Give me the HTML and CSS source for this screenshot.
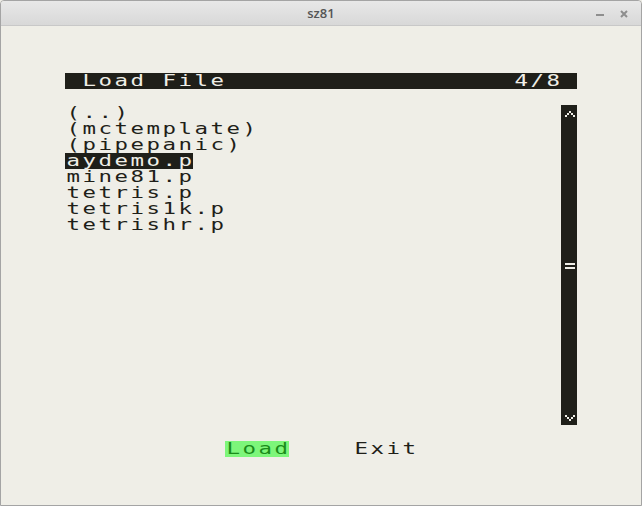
FILE: index.html
```html
<!DOCTYPE html>
<html>
<head>
<meta charset="utf-8">
<title>sz81</title>
<link rel="stylesheet" href="styles.css">
</head>
<body>
<div class="window">
  <div class="titlebar">
    <span class="title">sz81</span>
    <div class="controls">
      <svg class="ctl" width="8" height="8" viewBox="0 0 8 8"><rect x="0" y="4" width="8" height="2" fill="#8e8e8e"/></svg>
      <svg class="ctl" width="8" height="8" viewBox="0 0 8 8"><path d="M1 1 L7 7 M7 1 L1 7" stroke="#8e8e8e" stroke-width="2"/></svg>
    </div>
  </div>
  <div class="content">
    <div class="screen">
      <div class="header">
        <span class="zx"> Load File</span>
        <span class="count"><span class="zx">4/8</span></span>
      </div>
      <div class="main">
        <ul class="files">
          <li><span class="zx">(..)</span></li>
          <li><span class="zx">(mctemplate)</span></li>
          <li><span class="zx">(pipepanic)</span></li>
          <li><span class="sel"><span class="zx">aydemo.p</span></span></li>
          <li><span class="zx">mine81.p</span></li>
          <li><span class="zx">tetris.p</span></li>
          <li><span class="zx">tetris1k.p</span></li>
          <li><span class="zx">tetrishr.p</span></li>
        </ul>
        <div class="scrollbar">
          <svg class="cell" width="16" height="16" viewBox="0 0 16 16"><g fill="#efeee7"><rect x="8" y="6" width="2" height="2"/><rect x="6" y="8" width="2" height="2"/><rect x="10" y="8" width="2" height="2"/><rect x="4" y="10" width="2" height="2"/><rect x="12" y="10" width="2" height="2"/></g></svg>
          <svg class="cell thumb" width="16" height="16" viewBox="0 0 16 16"><g fill="#efeee7"><rect x="4" y="6" width="10" height="2"/><rect x="4" y="10" width="10" height="2"/></g></svg>
          <svg class="cell down" width="16" height="16" viewBox="0 0 16 16"><g fill="#efeee7"><rect x="4" y="6" width="2" height="2"/><rect x="12" y="6" width="2" height="2"/><rect x="6" y="8" width="2" height="2"/><rect x="10" y="8" width="2" height="2"/><rect x="8" y="10" width="2" height="2"/></g></svg>
        </div>
      </div>
      <div class="buttons">
        <span class="btn active"><span class="zx">Load</span></span>
        <span class="btn"><span class="zx">Exit</span></span>
      </div>
    </div>
  </div>
</div>
</body>
</html>
```

FILE: styles.css
```css
html, body {
  margin: 0;
  padding: 0;
  background: #efeee7;
}

.window {
  width: 642px;
  height: 506px;
  box-sizing: border-box;
  border: 1px solid #a4a4a4;
  border-radius: 4px 4px 0 0;
  overflow: hidden;
  display: flex;
  flex-direction: column;
  background: #efeee7;
}

.titlebar {
  height: 24px;
  flex: none;
  background: linear-gradient(#e8e8e8, #d8d8d8);
  border-bottom: 1px solid #c8c8c8;
  position: relative;
  display: flex;
  align-items: center;
  justify-content: center;
}

.title {
  font-family: "Open Sans", "DejaVu Sans", sans-serif;
  font-size: 13px;
  font-weight: 600;
  color: #555555;
  line-height: 24px;
}

.controls {
  position: absolute;
  right: 13px;
  top: 9px;
  display: flex;
  gap: 16px;
}

.ctl {
  display: block;
}

.content {
  flex: 1;
  background: #efeee7;
}

.screen {
  padding: 47px 0 0 64px;
}

/* ZX81-like text: each 16px character cell, glyphs widened */
.zx {
  display: inline-block;
  vertical-align: top;
  font-family: "DejaVu Sans Mono", "Liberation Mono", monospace;
  font-size: 16px;
  font-weight: normal;
  letter-spacing: 1.8px;
  line-height: 16px;
  height: 16px;
  white-space: pre;
  padding-left: 1px;
  transform: scaleX(1.4);
  transform-origin: 0 0;
}

.header {
  width: 512px;
  height: 16px;
  background: #1f1f19;
  color: #efeee7;
  display: flex;
  justify-content: space-between;
}

.count {
  width: 64px;
  height: 16px;
}

.main {
  display: flex;
  margin-top: 16px;
  height: 320px;
}

.files {
  list-style: none;
  margin: 0;
  padding: 0;
  width: 496px;
  color: #1f1f19;
}

.files li {
  height: 16px;
  line-height: 16px;
}

.sel {
  display: inline-block;
  vertical-align: top;
  background: #1f1f19;
  color: #efeee7;
  width: 128px;
  height: 16px;
}

.scrollbar {
  width: 16px;
  background: #1f1f19;
  display: flex;
  flex-direction: column;
}

.cell {
  display: block;
  flex: none;
}

.thumb {
  margin-top: 136px;
}

.down {
  margin-top: auto;
}

.buttons {
  margin-top: 16px;
  padding-left: 160px;
  display: flex;
  gap: 64px;
  color: #1f1f19;
}

.btn {
  display: block;
  height: 16px;
  width: 64px;
}

.btn.active {
  background: #7df67a;
  color: #1a8c1a;
}
```
